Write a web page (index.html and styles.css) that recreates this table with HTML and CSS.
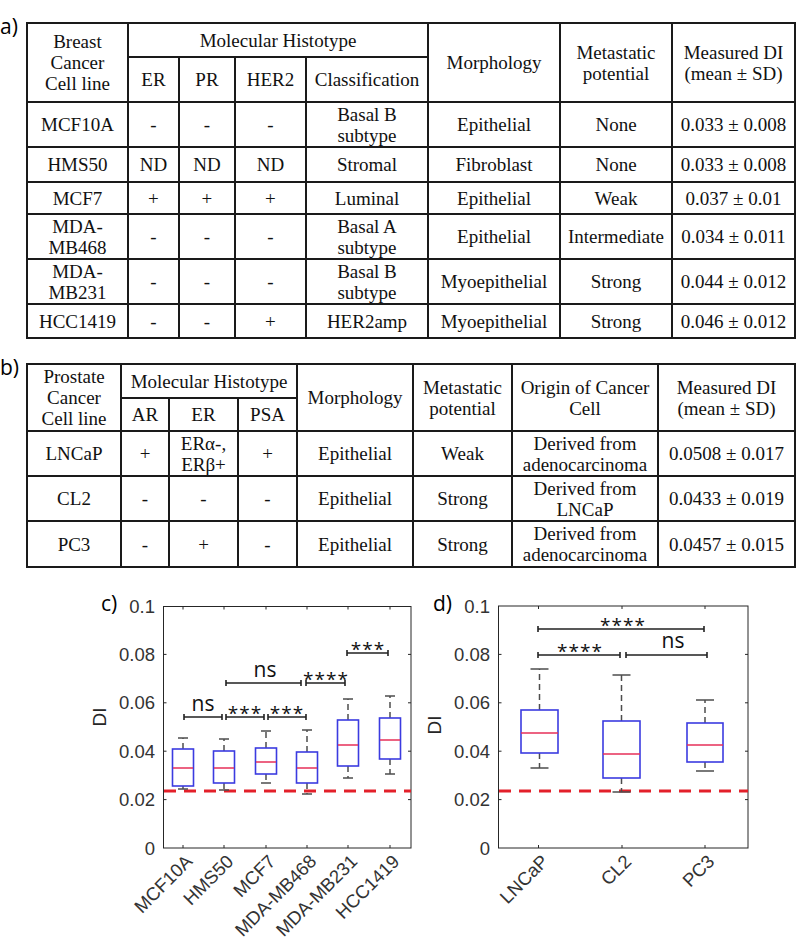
FILE: index.html
```html
<!DOCTYPE html>
<html lang="en">
<head>
<meta charset="utf-8">
<title>Cell line tables and DI box plots</title>
<link rel="stylesheet" href="styles.css">
</head>
<body>
<div class="figure">
  <section class="panel panel-a">
    <div class="plabel">a)</div>
    <table class="tbl tbl-a">
      <colgroup>
        <col class="w101"><col class="w51"><col class="w56"><col class="w71"><col class="w122"><col class="w132"><col class="w112"><col class="w123">
      </colgroup>
      <tr class="h34">
        <th rowspan="2">Breast<br>Cancer<br>Cell line</th>
        <th colspan="4">Molecular Histotype</th>
        <th rowspan="2">Morphology</th>
        <th rowspan="2">Metastatic<br>potential</th>
        <th rowspan="2">Measured DI<br>(mean ± SD)</th>
      </tr>
      <tr class="h45">
        <th>ER</th><th>PR</th><th>HER2</th><th>Classification</th>
      </tr>
      <tr class="h45">
        <td>MCF10A</td><td>-</td><td>-</td><td>-</td><td>Basal B<br>subtype</td><td>Epithelial</td><td>None</td><td>0.033 ± 0.008</td>
      </tr>
      <tr class="h35">
        <td>HMS50</td><td>ND</td><td>ND</td><td>ND</td><td>Stromal</td><td>Fibroblast</td><td>None</td><td>0.033 ± 0.008</td>
      </tr>
      <tr class="h32">
        <td>MCF7</td><td>+</td><td>+</td><td>+</td><td>Luminal</td><td>Epithelial</td><td>Weak</td><td>0.037 ± 0.01</td>
      </tr>
      <tr class="h45">
        <td>MDA-<br>MB468</td><td>-</td><td>-</td><td>-</td><td>Basal A<br>subtype</td><td>Epithelial</td><td>Intermediate</td><td>0.034 ± 0.011</td>
      </tr>
      <tr class="h45">
        <td>MDA-<br>MB231</td><td>-</td><td>-</td><td>-</td><td>Basal B<br>subtype</td><td>Myoepithelial</td><td>Strong</td><td>0.044 ± 0.012</td>
      </tr>
      <tr class="h34">
        <td>HCC1419</td><td>-</td><td>-</td><td>+</td><td>HER2amp</td><td>Myoepithelial</td><td>Strong</td><td>0.046 ± 0.012</td>
      </tr>
    </table>
  </section>

  <section class="panel panel-b">
    <div class="plabel">b)</div>
    <table class="tbl tbl-b">
      <colgroup>
        <col class="w94"><col class="w48"><col class="w69"><col class="w59"><col class="w116"><col class="w99"><col class="w146"><col class="w137">
      </colgroup>
      <tr class="h34">
        <th rowspan="2">Prostate<br>Cancer<br>Cell line</th>
        <th colspan="3">Molecular Histotype</th>
        <th rowspan="2">Morphology</th>
        <th rowspan="2">Metastatic<br>potential</th>
        <th rowspan="2">Origin of Cancer<br>Cell</th>
        <th rowspan="2">Measured DI<br>(mean ± SD)</th>
      </tr>
      <tr class="h33">
        <th>AR</th><th>ER</th><th>PSA</th>
      </tr>
      <tr class="h45">
        <td>LNCaP</td><td>+</td><td>ERα-,<br>ERβ+</td><td>+</td><td>Epithelial</td><td>Weak</td><td>Derived from<br>adenocarcinoma</td><td>0.0508 ± 0.017</td>
      </tr>
      <tr class="h45">
        <td>CL2</td><td>-</td><td>-</td><td>-</td><td>Epithelial</td><td>Strong</td><td>Derived from<br>LNCaP</td><td>0.0433 ± 0.019</td>
      </tr>
      <tr class="h46">
        <td>PC3</td><td>-</td><td>+</td><td>-</td><td>Epithelial</td><td>Strong</td><td>Derived from<br>adenocarcinoma</td><td>0.0457 ± 0.015</td>
      </tr>
    </table>
  </section>

  <section class="charts">
    <svg class="chart-svg" width="796" height="385" viewBox="0 566 796 385" xmlns="http://www.w3.org/2000/svg">
      <!-- ================= panel c ================= -->
      <text class="panel-lbl" x="101" y="611">c)</text>
      <text class="ylab" transform="translate(106,717) rotate(-90)">DI</text>
      <g class="ytl">
        <text x="155" y="606">0.1</text>
        <text x="155" y="654.4">0.08</text>
        <text x="155" y="702.8">0.06</text>
        <text x="155" y="751.2">0.04</text>
        <text x="155" y="799.6">0.02</text>
        <text x="155" y="848">0</text>
      </g>
      <rect class="axbox" x="163.5" y="606.5" width="247.5" height="241.5"/>
      <g class="tick">
        <path d="M163.5 654.4h3M163.5 702.8h3M163.5 751.2h3M163.5 799.6h3"/>
        <path d="M411 654.4h-3M411 702.8h-3M411 751.2h-3M411 799.6h-3"/>
        <path d="M183 848v-3M224 848v-3M266 848v-3M307 848v-3M348 848v-3M390 848v-3"/>
        <path d="M183 606.5v3M224 606.5v3M266 606.5v3M307 606.5v3M348 606.5v3M390 606.5v3"/>
      </g>
      <line class="thresh" x1="164" y1="791" x2="411" y2="791"/>
      <!-- whiskers -->
      <g class="whisk">
        <path d="M183 749V738M183 786V789"/>
        <path d="M224 751V739M224 783V790"/>
        <path d="M266 748V731M266 774V783"/>
        <path d="M307 752V730M307 783V794"/>
        <path d="M348 720V699M348 766V778"/>
        <path d="M390 718V696M390 759V774"/>
      </g>
      <g class="cap">
        <path d="M178 738h10M178 789h10"/>
        <path d="M219 739h10M219 790h10"/>
        <path d="M261 731h10M261 783h10"/>
        <path d="M302 730h10M302 794h10"/>
        <path d="M343 699h10M343 778h10"/>
        <path d="M385 696h10M385 774h10"/>
      </g>
      <g class="bx">
        <rect x="172.5" y="749" width="21" height="37"/>
        <rect x="213.5" y="751" width="21" height="32"/>
        <rect x="255.5" y="748" width="21" height="26"/>
        <rect x="296.5" y="752" width="21" height="31"/>
        <rect x="337.5" y="720" width="21" height="46"/>
        <rect x="379.5" y="718" width="21" height="41"/>
      </g>
      <g class="med">
        <path d="M173 768h20M214 768h20M256 762h20M297 768h20M338 745h20M380 740h20"/>
      </g>
      <!-- significance brackets c -->
      <g class="brk">
        <path d="M184 714v6M184 717H222M222 714v6"/>
        <path d="M226 714v6M226 717H264M264 714v6"/>
        <path d="M268 714v6M268 717H306M306 714v6"/>
        <path d="M226 680v6M226 683H301M301 680v6"/>
        <path d="M306 680v6M306 683H345M345 680v6"/>
        <path d="M347 650v6M347 653H388M388 650v6"/>
      </g>
      <g class="sig">
        <text x="203" y="711">ns</text>
        <text class="ast" x="245" y="720">***</text>
        <text class="ast" x="287" y="720">***</text>
        <text x="265" y="677">ns</text>
        <text class="ast" x="326" y="686">****</text>
        <text class="ast" x="368" y="656">***</text>
      </g>
      <g class="xtl">
        <text transform="translate(189,858) rotate(-45)">MCF10A</text>
        <text transform="translate(230,858) rotate(-45)">HMS50</text>
        <text transform="translate(272,858) rotate(-45)">MCF7</text>
        <text transform="translate(313,858) rotate(-45)">MDA-MB468</text>
        <text transform="translate(354,858) rotate(-45)">MDA-MB231</text>
        <text transform="translate(396,858) rotate(-45)">HCC1419</text>
      </g>

      <!-- ================= panel d ================= -->
      <text class="panel-lbl" x="433" y="611">d)</text>
      <text class="ylab" transform="translate(441,725) rotate(-90)">DI</text>
      <g class="ytl">
        <text x="490" y="606">0.1</text>
        <text x="490" y="654.4">0.08</text>
        <text x="490" y="702.8">0.06</text>
        <text x="490" y="751.2">0.04</text>
        <text x="490" y="799.6">0.02</text>
        <text x="490" y="848">0</text>
      </g>
      <rect class="axbox" x="498.5" y="606" width="249.5" height="242"/>
      <g class="tick">
        <path d="M498.5 654.4h3M498.5 702.8h3M498.5 751.2h3M498.5 799.6h3"/>
        <path d="M748 654.4h-3M748 702.8h-3M748 751.2h-3M748 799.6h-3"/>
        <path d="M538.5 848v-3M622 848v-3M705 848v-3"/>
        <path d="M538.5 606v3M622 606v3M705 606v3"/>
      </g>
      <line class="thresh" x1="499" y1="791" x2="748" y2="791"/>
      <g class="whisk">
        <path d="M539.5 710V669M539.5 753V768"/>
        <path d="M621.5 721V675M621.5 778V792"/>
        <path d="M705 723V700M705 762V771"/>
      </g>
      <g class="cap">
        <path d="M530.5 669h18M530.5 768h18"/>
        <path d="M612.5 675h18M612.5 792h18"/>
        <path d="M696 700h18M696 771h18"/>
      </g>
      <g class="bx">
        <rect x="521" y="710" width="37" height="43"/>
        <rect x="603" y="721" width="37" height="57"/>
        <rect x="687" y="723" width="36" height="39"/>
      </g>
      <g class="med">
        <path d="M521 733h37M603 754h37M687 745h36"/>
      </g>
      <g class="brk">
        <path d="M538 626v6M538 629H704M704 626v6"/>
        <path d="M538 652v6M538 655H620M620 652v6"/>
        <path d="M626 652v6M626 655H707M707 652v6"/>
      </g>
      <g class="sig">
        <text class="ast" x="623" y="632">****</text>
        <text class="ast" x="580" y="658">****</text>
        <text x="673" y="648">ns</text>
      </g>
      <g class="xtl">
        <text transform="translate(545,858) rotate(-45)">LNCaP</text>
        <text transform="translate(628,858) rotate(-45)">CL2</text>
        <text transform="translate(711,858) rotate(-45)">PC3</text>
      </g>
    </svg>
  </section>
</div>
</body>
</html>
```

FILE: styles.css
```css
html, body {
  margin: 0;
  padding: 0;
  background: #ffffff;
}

.figure {
  width: 796px;
  height: 951px;
  display: flex;
  flex-direction: column;
  overflow: hidden;
}

.panel {
  display: flex;
  align-items: flex-start;
}

.panel-a {
  margin-top: 22px;
  height: 315px;
}

.panel-b {
  margin-top: 26px;
  height: 203px;
}

.plabel {
  width: 26px;
  margin-top: -9px;
  font-family: "Open Sans", "Liberation Sans", sans-serif;
  font-size: 21px;
  line-height: 26px;
  color: #000;
}

.tbl {
  border-collapse: collapse;
  table-layout: fixed;
  width: 768px;
  font-family: "Liberation Serif", "DejaVu Serif", serif;
  font-size: 19px;
  line-height: 21px;
  color: #111;
}

.tbl th,
.tbl td {
  border: 2px solid #1a1a1a;
  padding: 0;
  text-align: center;
  vertical-align: middle;
  font-weight: normal;
  white-space: nowrap;
}

.h32 { height: 32px; }
.h33 { height: 33px; }
.h34 { height: 34px; }
.h35 { height: 35px; }
.h45 { height: 45px; }
.h46 { height: 46px; }

.w48 { width: 48px; }
.w51 { width: 51px; }
.w56 { width: 56px; }
.w59 { width: 59px; }
.w69 { width: 69px; }
.w71 { width: 71px; }
.w94 { width: 94px; }
.w99 { width: 99px; }
.w101 { width: 101px; }
.w112 { width: 112px; }
.w116 { width: 116px; }
.w122 { width: 122px; }
.w123 { width: 123px; }
.w132 { width: 132px; }
.w137 { width: 137px; }
.w146 { width: 146px; }

.charts {
  height: 385px;
}

.chart-svg {
  display: block;
}

.panel-lbl {
  font-family: "Open Sans", "Liberation Sans", sans-serif;
  font-size: 21px;
  fill: #000;
}

.ylab {
  font-family: "Liberation Sans", Arial, sans-serif;
  font-size: 19px;
  fill: #262626;
  text-anchor: middle;
}

.ytl text {
  font-family: "Liberation Sans", Arial, sans-serif;
  font-size: 18.5px;
  fill: #333;
  text-anchor: end;
  dominant-baseline: central;
}

.xtl text {
  font-family: "Liberation Sans", Arial, sans-serif;
  font-size: 18.5px;
  fill: #333;
  text-anchor: end;
  dominant-baseline: central;
}

.axbox {
  fill: none;
  stroke: #262626;
  stroke-width: 1;
}

.tick path {
  fill: none;
  stroke: #262626;
  stroke-width: 1;
}

.thresh {
  stroke: #e3202a;
  stroke-width: 3;
  stroke-dasharray: 12 8;
}

.whisk path {
  fill: none;
  stroke: #4d4d4d;
  stroke-width: 1.5;
  stroke-dasharray: 6 4;
}

.cap path {
  fill: none;
  stroke: #4d4d4d;
  stroke-width: 1.5;
}

.bx rect {
  fill: none;
  stroke: #3b3be0;
  stroke-width: 1.6;
}

.med path {
  fill: none;
  stroke: #e6305a;
  stroke-width: 1.6;
}

.brk path {
  fill: none;
  stroke: #222;
  stroke-width: 1.6;
}

.sig text {
  font-family: "Open Sans", "Liberation Sans", sans-serif;
  font-size: 21px;
  fill: #111;
  text-anchor: middle;
}

.sig text.ast {
  font-size: 19px;
  letter-spacing: 1px;
}
```
